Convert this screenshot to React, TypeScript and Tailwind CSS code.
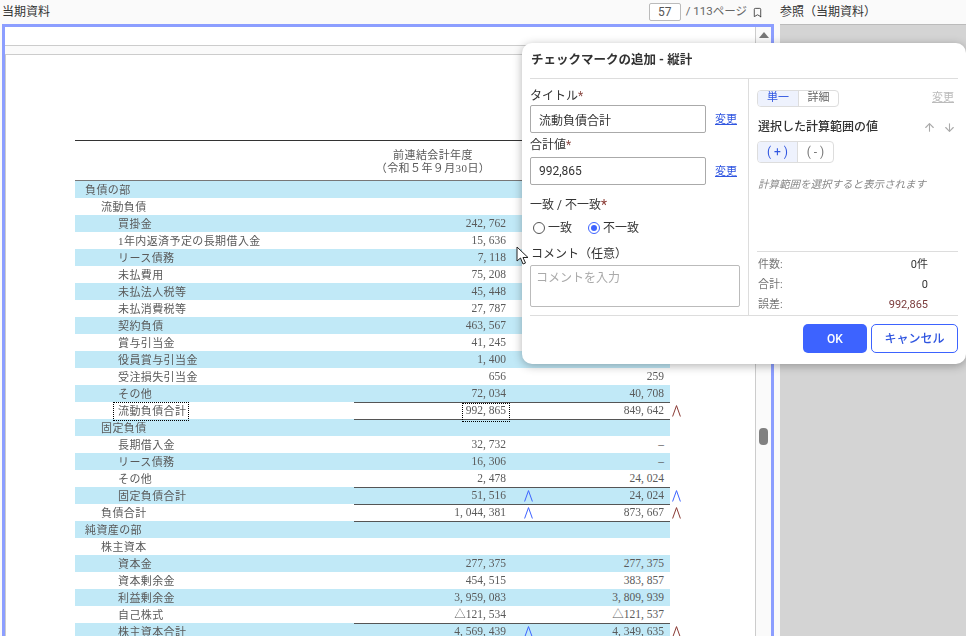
import React from "react";
import { ArrowDown, ArrowUp, Bookmark } from "lucide-react";

interface RowData {
    label: string;
    indent: number;
    value?: string;
    prior?: string;
    line?: boolean; // rule on the top edge of the figures
    mark?: "blue";
    priorMark?: "blue" | "red";
    selected?: boolean;
}

const rows: RowData[] = [
    { label: "負債の部", indent: 0 },
    { label: "流動負債", indent: 1 },
    { label: "買掛金", indent: 2, value: "242, 762" },
    { label: "1年内返済予定の長期借入金", indent: 2, value: "15, 636" },
    { label: "リース債務", indent: 2, value: "7, 118" },
    { label: "未払費用", indent: 2, value: "75, 208" },
    { label: "未払法人税等", indent: 2, value: "45, 448" },
    { label: "未払消費税等", indent: 2, value: "27, 787" },
    { label: "契約負債", indent: 2, value: "463, 567" },
    { label: "賞与引当金", indent: 2, value: "41, 245" },
    { label: "役員賞与引当金", indent: 2, value: "1, 400" },
    { label: "受注損失引当金", indent: 2, value: "656", prior: "259" },
    { label: "その他", indent: 2, value: "72, 034", prior: "40, 708" },
    { label: "流動負債合計", indent: 2, value: "992, 865", prior: "849, 642", line: true, priorMark: "red", selected: true },
    { label: "固定負債", indent: 1, line: true },
    { label: "長期借入金", indent: 2, value: "32, 732", prior: "–" },
    { label: "リース債務", indent: 2, value: "16, 306", prior: "–" },
    { label: "その他", indent: 2, value: "2, 478", prior: "24, 024" },
    { label: "固定負債合計", indent: 2, value: "51, 516", prior: "24, 024", line: true, mark: "blue", priorMark: "blue" },
    { label: "負債合計", indent: 1, value: "1, 044, 381", prior: "873, 667", line: true, mark: "blue", priorMark: "red" },
    { label: "純資産の部", indent: 0, line: true },
    { label: "株主資本", indent: 1 },
    { label: "資本金", indent: 2, value: "277, 375", prior: "277, 375" },
    { label: "資本剰余金", indent: 2, value: "454, 515", prior: "383, 857" },
    { label: "利益剰余金", indent: 2, value: "3, 959, 083", prior: "3, 809, 939" },
    { label: "自己株式", indent: 2, value: "△121, 534", prior: "△121, 537" },
    { label: "株主資本合計", indent: 2, value: "4, 569, 439", prior: "4, 349, 635", line: true, mark: "blue", priorMark: "red" },
];

const indents = ["pl-[10px]", "pl-[26px]", "pl-[43px]"];

const CheckMark = ({ color }: { color: "blue" | "red" }) => (
    <svg width="9" height="12" viewBox="0 0 9 12" fill="none" className={color === "blue" ? "text-[#3d63ff]" : "text-[#8a3a34]"}>
        <path d="M0.6 11.5 L4.5 0.6 L8.4 11.5" stroke="currentColor" strokeWidth="1" />
    </svg>
);

const TableRow = ({ row, index }: { row: RowData; index: number }) => (
    <div className="flex h-[17px] w-[612px] items-center">
        <div className={`flex h-full w-[595px] items-center ${index % 2 === 0 ? "bg-[#c1e9f7]" : "bg-white"}`}>
            <div className={`relative flex h-full w-[279px] items-center pt-px ${indents[row.indent]}`}>
                {row.label}
                {/* Selected range box */}
                {row.selected && <div className="absolute left-[38px] top-0 h-[19px] w-[76px] border border-dotted border-black" />}
            </div>
            <div className={`box-border flex h-full flex-1 items-center text-[11.5px] tracking-normal ${row.line ? "border-t border-[#555]" : "pt-px"}`}>
                <div className="relative flex h-full w-[152px] shrink-0 items-center justify-end">
                    {row.value}
                    {row.selected && <div className="absolute left-[108px] top-0 h-[19px] w-[48px] border border-dotted border-black" />}
                </div>
                <div className="flex h-full w-[27px] shrink-0 items-center justify-end">
                    {row.mark && <CheckMark color={row.mark} />}
                </div>
                <div className="flex h-full flex-1 items-center justify-end pr-[6px]">{row.prior}</div>
            </div>
        </div>
        <div className="flex h-full flex-1 items-center pl-[2px]">
            {row.priorMark && <CheckMark color={row.priorMark} />}
        </div>
    </div>
);

const ChangeLink = () => (
    <a className="ml-[9px] text-[11px] leading-none text-[#2f55e0] underline">変更</a>
);

const Required = () => <span className="text-[#8a4a44]">*</span>;

const Dialog = () => (
    <div className="absolute left-[522px] top-[43px] flex h-[321px] w-[444px] flex-col rounded-[10px] bg-white px-2 text-[#333] shadow-[0_2px_10px_rgba(0,0,0,0.3)]">
        {/* Title */}
        <div className="flex h-[36px] shrink-0 items-center border-b border-[#ddd] pl-px text-[12.5px] font-bold text-[#333]">
            チェックマークの追加 - 縦計
        </div>

        {/* Body */}
        <div className="flex h-[237px] shrink-0 border-b border-[#ddd]">
            {/* Form */}
            <div className="w-[219px] shrink-0 border-r border-[#ddd] pt-2 text-[12px]">
                <div className="flex h-[18px] items-center">タイトル<Required /></div>
                <div className="flex items-center">
                    <div className="flex h-[28px] w-[176px] items-center rounded-[2px] border border-[#aaa] pl-2 pt-[3px]">流動負債合計</div>
                    <ChangeLink />
                </div>
                <div className="flex h-[24px] items-center">合計値<Required /></div>
                <div className="flex items-center">
                    <div className="flex h-[28px] w-[176px] items-center rounded-[2px] border border-[#aaa] pl-2">992,865</div>
                    <ChangeLink />
                </div>
                <div className="mt-[11px] flex h-[18px] items-center">
                    一致 / 不一致<span className="text-[14px] text-[#8a3a34]">*</span>
                </div>
                <div className="mt-[5px] flex h-[18px] items-center pl-[3px]">
                    <span className="h-[12px] w-[12px] rounded-full border border-[#555]" />
                    <span className="ml-[3px]">一致</span>
                    <span className="ml-4 flex h-[12px] w-[12px] items-center justify-center rounded-full border border-[#3d63ff]">
                        <span className="h-[6px] w-[6px] rounded-full bg-[#3d63ff]" />
                    </span>
                    <span className="ml-[3px]">不一致</span>
                </div>
                <div className="mt-[8px] flex h-[18px] items-center pl-px">コメント（任意）</div>
                <div className="mt-[2px] h-[42px] w-[210px] rounded-[2px] border border-[#bbb] pl-[5px] pt-[3px] text-[#aaa]">
                    コメントを入力
                </div>
            </div>

            {/* Calculation range */}
            <div className="flex flex-1 flex-col pl-2">
                <div className="mt-[11px] flex h-[17px] shrink-0 items-center justify-between pr-[4px]">
                    <div className="flex h-full overflow-hidden rounded-[4px] border border-[#ddd] text-[11px]">
                        <div className="flex w-[41px] items-center justify-center border-r border-[#ddd] bg-[#eef2fd] text-[#2f55e0]">単一</div>
                        <div className="flex w-[39px] items-center justify-center text-[#666]">詳細</div>
                    </div>
                    <a className="text-[11px] text-[#bbb] underline">変更</a>
                </div>
                <div className="mt-[10px] flex h-[20px] shrink-0 items-center justify-between pl-px pr-[2px] text-[12px] font-medium">
                    選択した計算範囲の値
                    <div className="flex gap-[7px] text-[#aaa]">
                        <ArrowUp size={13} />
                        <ArrowDown size={13} />
                    </div>
                </div>
                <div className="mt-[4px] flex h-[22px] w-[77px] shrink-0 overflow-hidden rounded-[4px] border border-[#ddd] text-[12px]">
                    <div className="flex w-[40px] items-center justify-center border-r border-[#ddd] bg-[#eef2fd] text-[#2f55e0]">( + )</div>
                    <div className="flex flex-1 items-center justify-center text-[#777]">( - )</div>
                </div>
                <div className="mt-[13px] flex h-[18px] shrink-0 items-center pl-px text-[10.5px] italic text-[#888]">
                    計算範囲を選択すると表示されます
                </div>

                {/* Totals */}
                <div className="mt-[57px] shrink-0 border-t border-[#ddd] pr-[30px] pt-[3px] text-[11px]">
                    <div className="flex h-[20px] items-center justify-between pl-px">
                        <span className="text-[#777]">件数:</span>
                        <span>0件</span>
                    </div>
                    <div className="flex h-[20px] items-center justify-between pl-px">
                        <span className="text-[#777]">合計:</span>
                        <span>0</span>
                    </div>
                    <div className="flex h-[20px] items-center justify-between pl-px">
                        <span className="text-[#777]">誤差:</span>
                        <span className="text-[#7a3b3b]">992,865</span>
                    </div>
                </div>
            </div>
        </div>

        {/* Footer */}
        <div className="flex justify-end gap-1 pt-2 text-[12px] font-medium">
            <button className="h-[29px] w-[64px] rounded-[5px] bg-[#3d63ff] text-white">OK</button>
            <button className="h-[29px] w-[87px] rounded-[5px] border border-[#3d63ff] bg-white text-[#2f55e0]">キャンセル</button>
        </div>
    </div>
);

export default function App() {
    return (
        <div className="relative flex h-[636px] w-[966px] flex-col overflow-hidden bg-[#fafafa] font-['Roboto','Noto_Sans_CJK_JP',sans-serif] text-[12px] text-[#333]">
            {/* Header */}
            <div className="flex h-[24px] shrink-0 items-center pl-[2px]">
                <span>当期資料</span>
                <div className="ml-auto flex items-center">
                    <div className="flex h-[18px] w-[32px] items-center justify-center rounded-[2px] border border-[#bbb] bg-white text-[#555]">57</div>
                    <span className="ml-[5px] text-[11.5px] text-[#666]">/ 113ページ</span>
                    <Bookmark size={11} className="ml-[5px] text-[#444]" />
                    <span className="ml-[17px] w-[186px] whitespace-nowrap">参照（当期資料）</span>
                </div>
            </div>

            {/* Panes */}
            <div className="flex min-h-0 flex-1">
                <div className="ml-[2px] flex w-[772px] shrink-0 border-x-[3px] border-t-[3px] border-[#8c9eff] bg-white">
                    <div className="flex min-w-0 flex-1 flex-col">
                        <div className="h-[19px] shrink-0 border-b border-[#ccc]" />
                        <div className="h-[9px] shrink-0 border-b border-[#ccc] bg-[#fafafa]" />
                        {/* Statement page */}
                        <div className="flex-1 overflow-hidden border-l border-[#ccc] pl-[69px] pt-[85px] font-['Liberation_Serif','Noto_Sans_CJK_JP',serif] text-[11px] tracking-[0.4px] text-[#5a5a5a] blur-[0.3px]">
                            <div className="box-border h-[41px] w-[595px] border-y border-t-[#333] border-b-[#777] pl-[279px]">
                                <div className="w-[158px] pt-[8px] text-center leading-[13px]">
                                    <div>前連結会計年度</div>
                                    <div>（令和５年９月30日）</div>
                                </div>
                            </div>
                            {rows.map((row, index) => (
                                <TableRow key={index} row={row} index={index} />
                            ))}
                        </div>
                    </div>
                    {/* Scrollbar */}
                    <div className="relative w-[16px] shrink-0 border-l border-[#ccc] bg-[#fafafa]">
                        <div className="mx-auto mt-[5px] h-0 w-0 border-x-[5px] border-b-[6px] border-x-transparent border-b-[#777]" />
                        <div className="absolute left-[3px] top-[401px] h-[17px] w-[9px] rounded-[4px] bg-[#808080]" />
                    </div>
                </div>
                <div className="w-[6px] shrink-0" />
                <div className="flex-1 border-t border-[#bbb] bg-[#d4d4d4]" />
            </div>

            <Dialog />

            {/* Mouse pointer */}
            <svg width="14" height="20" viewBox="0 0 14 20" className="absolute left-[516px] top-[246px]">
                <path d="M1 1 L1 15 L4.5 12 L7 18 L9.5 17 L7 11.5 L12 11.5 Z" fill="white" stroke="#222" strokeWidth="1" />
            </svg>
        </div>
    );
}
